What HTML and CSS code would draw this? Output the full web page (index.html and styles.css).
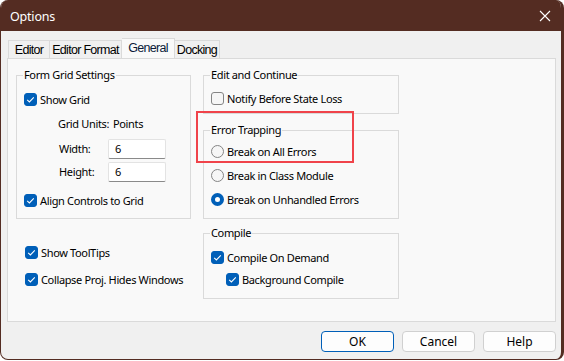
FILE: index.html
```html
<html>
<head>
	<meta charset="utf-8" />
	<title>Options</title>
	<link rel="stylesheet" href="styles.css">
</head>

<body>
	<div class="window">
		<div class="titlebar">
			<span class="title">Options</span>
			<svg class="close" width="12" height="12" viewBox="0 0 12 12">
				<path d="M1 1 L11 11 M11 1 L1 11" stroke="#fff" stroke-width="1.1" fill="none" />
			</svg>
		</div>

		<div class="content">
			<div class="tabs">
				<div class="tab tab-editor">Editor</div>
				<div class="tab tab-format">Editor Format</div>
				<div class="tab tab-general selected">General</div>
				<div class="tab tab-docking">Docking</div>
			</div>

			<div class="panel">
				<div class="col col-left">
					<fieldset class="group group-grid">
						<legend>Form Grid Settings</legend>
						<div class="row"><span class="check on"><svg viewBox="0 0 13 13"><path d="M3.2 6.8 L5.4 9 L9.8 4.4" /></svg></span>Show Grid</div>
						<div class="row units"><span class="units-label">Grid Units:</span>Points</div>
						<div class="row field field-first"><span class="field-label">Width:</span><span class="input">6</span></div>
						<div class="row field"><span class="field-label">Height:</span><span class="input">6</span></div>
						<div class="row align-row"><span class="check on"><svg viewBox="0 0 13 13"><path d="M3.2 6.8 L5.4 9 L9.8 4.4" /></svg></span>Align Controls to Grid</div>
					</fieldset>
					<div class="row loose tips-row"><span class="check on"><svg viewBox="0 0 13 13"><path d="M3.2 6.8 L5.4 9 L9.8 4.4" /></svg></span>Show ToolTips</div>
					<div class="row loose collapse-row"><span class="check on"><svg viewBox="0 0 13 13"><path d="M3.2 6.8 L5.4 9 L9.8 4.4" /></svg></span>Collapse Proj. Hides Windows</div>
				</div>

				<div class="col col-right">
					<fieldset class="group group-edit">
						<legend>Edit and Continue</legend>
						<div class="row"><span class="check"></span>Notify Before State Loss</div>
					</fieldset>
					<fieldset class="group group-errors">
						<legend>Error Trapping</legend>
						<div class="row"><span class="radio"></span>Break on All Errors</div>
						<div class="row"><span class="radio"></span>Break in Class Module</div>
						<div class="row"><span class="radio on"></span>Break on Unhandled Errors</div>
					</fieldset>
					<fieldset class="group group-compile">
						<legend>Compile</legend>
						<div class="row short"><span class="check on"><svg viewBox="0 0 13 13"><path d="M3.2 6.8 L5.4 9 L9.8 4.4" /></svg></span>Compile On Demand</div>
						<div class="row short indent"><span class="check on"><svg viewBox="0 0 13 13"><path d="M3.2 6.8 L5.4 9 L9.8 4.4" /></svg></span>Background Compile</div>
					</fieldset>
				</div>

				<div class="highlight"></div>
			</div>

			<div class="buttons">
				<div class="button default">OK</div>
				<div class="button">Cancel</div>
				<div class="button">Help</div>
			</div>
		</div>
	</div>
</body>
</html>
```

FILE: styles.css
```css
:root {
	--frame-color: #542c22;
	--accent-color: #005fb8;
	--line-color: #dadada;
}

html, body {
	margin: 0;
	background-color: #ffffff;
}

body {
	font-family: "Noto Sans", "Open Sans", sans-serif;
	font-size: 11px;
	letter-spacing: -0.35px;
	color: #000000;
}

.window {
	box-sizing: border-box;
	width: 564px;
	height: 360px;
	display: flex;
	flex-direction: column;
	background-color: #f0f0f0;
	border-left: 1px solid var(--frame-color);
	border-right: 3px solid var(--frame-color);
	border-bottom: 1px solid var(--frame-color);
	border-radius: 8px;
	overflow: hidden;
}

.titlebar {
	height: 31px;
	flex: none;
	display: flex;
	align-items: center;
	justify-content: space-between;
	padding: 0 10px 0 9px;
	background-color: var(--frame-color);
	color: #ffffff;
}

.title {
	font-size: 12.5px;
	letter-spacing: -0.2px;
	padding-top: 1px;
}

.close {
	display: block;
}

.content {
	flex: 1;
	padding: 7px 5px 0 6px;
}

/* tabs */

.tabs {
	display: flex;
	align-items: flex-end;
	height: 20px;
	padding-left: 1px;
	font-family: "Liberation Sans", Arial, sans-serif;
	font-size: 12.5px;
	letter-spacing: -0.7px;
	white-space: nowrap;
}

.tab {
	box-sizing: border-box;
	height: 18px;
	line-height: 18px;
	text-align: center;
	background-color: #f0f0f0;
	border: 1px solid var(--line-color);
	border-bottom: none;
	color: #000000;
}

.tab-editor {
	width: 42px;
}

.tab-format {
	width: 72px;
	border-left: none;
}

.tab-general {
	width: 53px;
}

.tab-docking {
	width: 45px;
	border-left: none;
}

.tab.selected {
	position: relative;
	height: 21px;
	margin-bottom: -1px;
	line-height: 18px;
	background-color: #f9f9f9;
	border-left: none;
	color: #0b1b3a;
}

/* panel */

.panel {
	position: relative;
	box-sizing: border-box;
	width: 549px;
	height: 264px;
	display: flex;
	gap: 12px;
	padding: 8px 0 0 8px;
	background-color: #f9f9f9;
	border: 1px solid var(--line-color);
}

.col {
	display: flex;
	flex-direction: column;
}

.col-left {
	width: 175px;
}

.col-right {
	width: 196px;
}

.group {
	margin: 0;
	padding: 0 7px;
	border: 1px solid var(--line-color);
	min-width: 0;
}

.group legend {
	padding: 0 1px;
	margin-left: -1px;
	line-height: 16px;
}

.row {
	display: flex;
	align-items: center;
	height: 24px;
	gap: 3px;
	white-space: nowrap;
}

.row.short {
	height: 22px;
}

.row.indent {
	padding-left: 15px;
}

.group-grid {
	padding-top: 4px;
	padding-bottom: 6px;
}

.units {
	padding-left: 34px;
	gap: 0;
}

.units-label {
	flex: none;
	width: 55px;
}

.field {
	height: 23px;
	padding-left: 35px;
	gap: 0;
}

.field-first {
	margin-top: 2px;
}

.field-label {
	flex: none;
	width: 49px;
}

.input {
	box-sizing: border-box;
	width: 58px;
	height: 20px;
	line-height: 18px;
	padding-left: 6px;
	background-color: #ffffff;
	border: 1px solid #e3e3e3;
	border-bottom-color: #8a8a8a;
	border-radius: 2px;
}

.align-row {
	margin-top: 5px;
}

.tips-row {
	margin-top: 21px;
	padding-left: 9px;
}

.collapse-row {
	margin-top: 3px;
	padding-left: 9px;
}

.group-edit {
	padding-top: 3px;
	padding-bottom: 3px;
}

.group-errors {
	margin-top: 8px;
	padding-top: 1px;
	padding-bottom: 7px;
}

.group-compile {
	margin-top: 6px;
	padding-top: 5px;
	padding-bottom: 8px;
}

/* check boxes and radio buttons */

.check, .radio {
	box-sizing: border-box;
	flex: none;
	width: 13px;
	height: 13px;
	background-color: #f6f6f6;
	border: 1px solid #858585;
}

.check {
	border-radius: 3px;
}

.check.on {
	background-color: var(--accent-color);
	border-color: var(--accent-color);
}

.check svg {
	display: block;
	width: 13px;
	height: 13px;
	margin: -1px;
}

.check svg path {
	fill: none;
	stroke: #ffffff;
	stroke-width: 1.1;
}

.radio {
	border-radius: 50%;
}

.radio.on {
	background-color: #ffffff;
	border: 4px solid var(--accent-color);
}

/* the red box drawn over the screenshot */

.highlight {
	position: absolute;
	left: 188px;
	top: 52px;
	width: 158px;
	height: 52px;
	box-sizing: border-box;
	border: 2px solid #f0434a;
}

/* buttons */

.buttons {
	display: flex;
	justify-content: flex-end;
	gap: 8px;
	margin-top: 9px;
}

.button {
	box-sizing: border-box;
	width: 73px;
	height: 21px;
	line-height: 19px;
	text-align: center;
	font-size: 12px;
	letter-spacing: 0;
	background-color: #fdfdfd;
	border: 1px solid #d0d0d0;
	border-radius: 4px;
}

.button.default {
	border-color: var(--accent-color);
}
```
